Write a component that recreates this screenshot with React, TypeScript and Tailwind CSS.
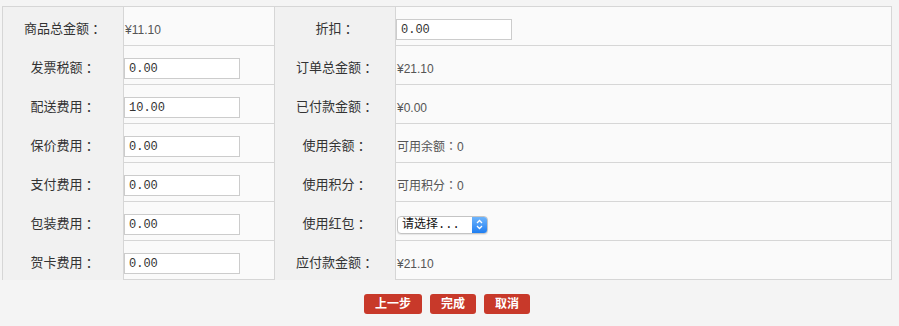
const rows = [
  { l1: '商品总金额', v1: { text: '¥11.10' }, l2: '折扣', v2: { input: '0.00' } },
  { l1: '发票税额', v1: { input: '0.00' }, l2: '订单总金额', v2: { text: '¥21.10' } },
  { l1: '配送费用', v1: { input: '10.00' }, l2: '已付款金额', v2: { text: '¥0.00' } },
  { l1: '保价费用', v1: { input: '0.00' }, l2: '使用余额', v2: { pre: '可用余额', text: '0' } },
  { l1: '支付费用', v1: { input: '0.00' }, l2: '使用积分', v2: { pre: '可用积分', text: '0' } },
  { l1: '包装费用', v1: { input: '0.00' }, l2: '使用红包', v2: { select: true } },
  { l1: '贺卡费用', v1: { input: '0.00' }, l2: '应付款金额', v2: { text: '¥21.10' } },
]

type Cell = { text?: string; pre?: string; input?: string; select?: boolean }

// centred full-width colon, as on the original page
const Colon = () => <span className="font-['Noto_Sans_CJK_JP',sans-serif]">：</span>

function Label({ children }: { children: string }) {
  return (
    <div className="flex w-[120px] shrink-0 items-center justify-center bg-[#f1f1f1] pt-[4px] text-[13px] text-[#333]">
      {children}
      <Colon />
    </div>
  )
}

function Value({ cell }: { cell: Cell }) {
  if (cell.input !== undefined) {
    return (
      <input
        defaultValue={cell.input}
        className="h-[21px] w-[116px] border border-[#cccccc] bg-white px-[4px] font-['Liberation_Mono',monospace] text-[12px] text-[#333] outline-none"
      />
    )
  }
  if (cell.select) {
    return (
      <div className="relative ml-[1px] h-[18px] w-[91px] overflow-hidden rounded-[4px] border border-[#c4c4c4] bg-white shadow-[0_1px_1px_rgba(0,0,0,0.08)]">
        <span className="absolute left-[4px] top-0 leading-[16px] font-['Liberation_Mono','Noto_Sans_CJK_SC',monospace] text-[12px] text-[#111]">
          请选择...
        </span>
        <span className="absolute right-0 top-0 flex h-full w-[15px] items-center justify-center bg-gradient-to-b from-[#6db4fb] to-[#1c7ef1]">
          <svg width="7" height="11" viewBox="0 0 7 11" fill="none" stroke="white" strokeWidth="1.3">
            <path d="M1 4 L3.5 1.5 L6 4" />
            <path d="M1 7 L3.5 9.5 L6 7" />
          </svg>
        </span>
      </div>
    )
  }
  return (
    <span className="ml-[1px] text-[12px] text-[#555]">
      {cell.pre && (
        <>
          {cell.pre}
          <Colon />
        </>
      )}
      {cell.text}
    </span>
  )
}

export default function App() {
  return (
    <div className="min-h-screen bg-[#f4f4f4] pt-[6px] font-['Liberation_Sans','Noto_Sans_CJK_SC',sans-serif]">
      <div className="ml-[2px] w-[890px] border-x border-t border-[#d6d6d6]">
        {rows.map((r) => (
          <div key={r.l1} className="flex h-[39px]">
            <Label>{r.l1}</Label>
            <div className="flex w-[152px] shrink-0 items-center border-x border-b border-[#d6d6d6] bg-[#fafafa] pt-[7px]">
              <Value cell={r.v1} />
            </div>
            <Label>{r.l2}</Label>
            <div className="flex flex-1 items-center border-l border-b border-[#d6d6d6] bg-[#fafafa] pt-[7px]">
              <Value cell={r.v2} />
            </div>
          </div>
        ))}
      </div>
      <div className="mt-[14px] ml-[2px] flex w-[890px] justify-center gap-[8px]">
        {['上一步', '完成', '取消'].map((b) => (
          <button
            key={b}
            className="h-[20px] rounded-[3px] bg-[#c8392a] px-[11px] text-[12px] font-bold leading-[20px] text-white"
          >
            {b}
          </button>
        ))}
      </div>
    </div>
  )
}
